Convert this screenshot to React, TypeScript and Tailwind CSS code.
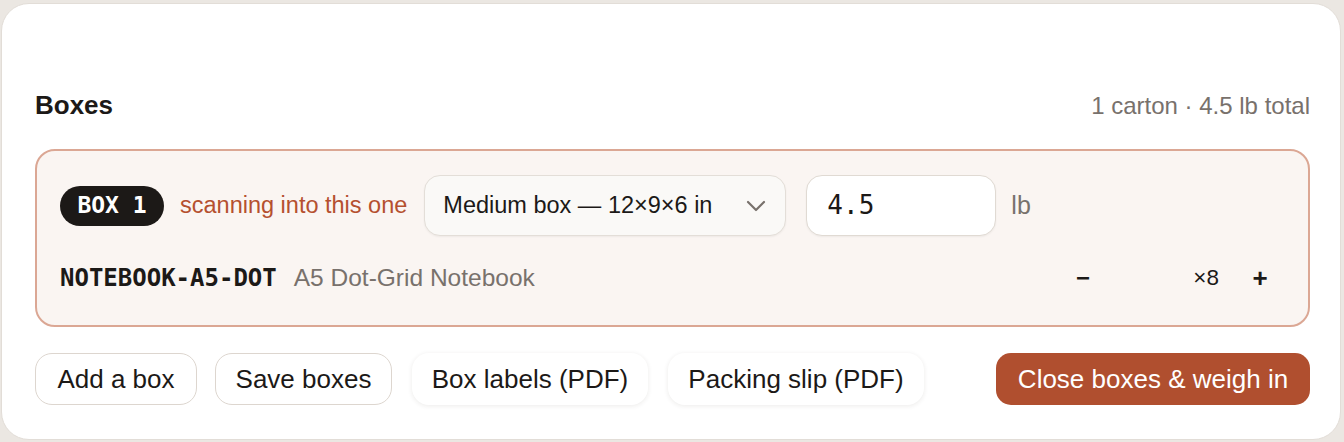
import { ChevronDown } from 'lucide-react'

const sans = "font-['Liberation_Sans',Arial,sans-serif]"
const mono = "font-['DejaVu_Sans_Mono','Liberation_Mono',monospace]"

function BoxCard() {
  return (
    <div className="rounded-[20px] border-2 border-[#dba794] bg-[#faf5f2] px-[23px] pt-[24px] pb-[25px]">
      <div className="flex h-[61px] items-center">
        <span
          className={`${mono} flex h-10 w-[104px] items-center justify-center rounded-full bg-[#1c1917] text-[23px] font-bold text-white`}>
          BOX 1
        </span>
        <span className="ml-4 text-[23.5px] text-[#b5502f]">scanning into this one</span>
        <div className="ml-[17px] flex h-[61px] w-[362px] items-center justify-between rounded-[16px] border border-[#e3ded8] bg-[#faf9f7] pr-[13px] pl-[18px] shadow-[0_1px_2px_rgba(0,0,0,0.05)]">
          <span className="text-[23.5px] text-[#1c1917]">Medium box — 12×9×6 in</span>
          <ChevronDown
            className="h-8 w-8 text-[#78716c]"
            strokeWidth={1.6}
          />
        </div>
        <div className="ml-5 flex h-[61px] w-[190px] items-center rounded-[16px] border border-[#e0dad3] bg-white pl-5 shadow-[0_1px_2px_rgba(0,0,0,0.05)]">
          <span className={`${mono} text-[26px] text-[#1c1917]`}>4.5</span>
        </div>
        <span className="ml-[15px] text-[25px] text-[#78716c]">lb</span>
      </div>
      <div className="mt-5 flex h-11 items-center">
        <span className={`${mono} text-[24px] font-bold text-[#1c1917]`}>NOTEBOOK-A5-DOT</span>
        <span className="ml-[17px] text-[24.5px] text-[#78716c]">A5 Dot-Grid Notebook</span>
        <div className="mr-[5px] ml-auto flex items-center text-[#1c1917]">
          <button className="flex h-10 w-10 items-center justify-center text-[24px] font-bold">−</button>
          <span className="w-[116px] text-right text-[22.5px]">×8</span>
          <button className="ml-[21px] flex h-10 w-10 items-center justify-center text-[26px] font-bold">+</button>
        </div>
      </div>
    </div>
  )
}

export default function App() {
  const outline =
    'flex h-[52px] items-center justify-center rounded-[17px] border-[1.5px] border-[#ddd6cf] bg-white text-[26px] text-[#1c1917]'
  const soft =
    'flex h-[52px] items-center justify-center rounded-[17px] bg-white text-[26px] text-[#1c1917] shadow-[0_1px_5px_rgba(40,30,20,0.09)]'

  return (
    <div className={`${sans} h-[442px] bg-[#ebe7e2] pt-[3px] pr-[3px] pl-[1px]`}>
      <div className="rounded-[28px] border-[1.5px] border-[#e2ddd7] bg-white pt-[84px] pr-[30px] pb-[34px] pl-[33px]">
        <div className="flex h-8 items-baseline justify-between">
          <h2 className="text-[26px] leading-8 font-bold text-[#1c1917]">Boxes</h2>
          <span className="text-[24px] text-[#78716c]">1 carton · 4.5 lb total</span>
        </div>
        <div className="mt-[29px]">
          <BoxCard />
        </div>
        <div className="mt-[26px] flex items-center">
          <button className={`${outline} w-[162px]`}>Add a box</button>
          <button className={`${outline} ml-[18px] w-[177px]`}>Save boxes</button>
          <button className={`${soft} ml-5 w-[236px]`}>Box labels (PDF)</button>
          <button className={`${soft} ml-5 w-[256px]`}>Packing slip (PDF)</button>
          <button className="ml-auto flex h-[52px] w-[314px] items-center justify-center rounded-[15px] bg-[#b04f2f] text-[26px] text-white">
            Close boxes &amp; weigh in
          </button>
        </div>
      </div>
    </div>
  )
}
